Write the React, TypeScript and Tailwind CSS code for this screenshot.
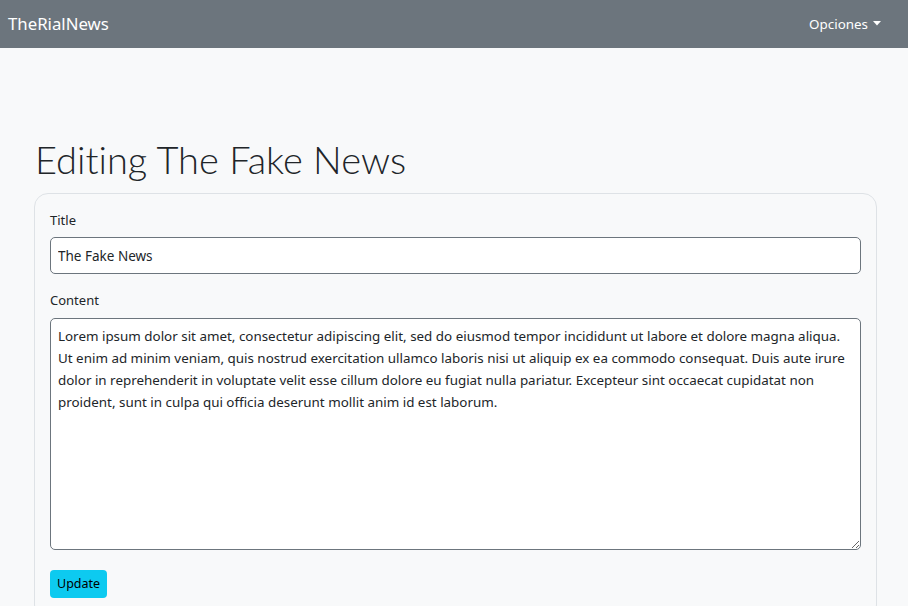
const lorem =
  "Lorem ipsum dolor sit amet, consectetur adipiscing elit, sed do eiusmod tempor incididunt ut labore et dolore magna aliqua. Ut enim ad minim veniam, quis nostrud exercitation ullamco laboris nisi ut aliquip ex ea commodo consequat. Duis aute irure dolor in reprehenderit in voluptate velit esse cillum dolore eu fugiat nulla pariatur. Excepteur sint occaecat cupidatat non proident, sunt in culpa qui officia deserunt mollit anim id est laborum.";

const App = () => {
  return (
    <div className="min-h-screen bg-[#f8f9fa] font-['Noto_Sans',sans-serif] text-[#212529]">
      <nav className="flex h-[48px] items-center justify-between bg-[#6c757d] px-2 text-white">
        <span className="text-[16.8px]">TheRialNews</span>
        <button className="mr-[19px] flex items-center gap-[5px] text-[13.4px]">
          Opciones
          <svg width="8" height="5" viewBox="0 0 8 5" fill="currentColor">
            <path d="M0 0h8L4 4.5z" />
          </svg>
        </button>
      </nav>

      <main className="pl-[34px] pr-[31px] pt-[86px]">
        <h1 className="mb-[9px] pl-px font-['Lato',sans-serif] text-[38px] font-light leading-[50px] [font-variant-ligatures:none]">
          Editing The Fake News
        </h1>
        <div className="rounded-[14px] border border-[#dee2e6] px-[15px] pb-[20px] pt-[16px]">
          <label className="block text-[13px] leading-[20px]">Title</label>
          <input
            className="mt-[7px] block h-[37px] w-full rounded-[5px] border border-[#6c757d] bg-white px-[7px] text-[13.5px] outline-none"
            defaultValue="The Fake News"
          />
          <label className="mt-[16px] block text-[13px] leading-[20px]">Content</label>
          <textarea
            className="mt-[8px] block h-[232px] w-full rounded-[5px] border border-[#6c757d] bg-white px-[7px] pb-[4px] pt-[6px] text-[13.4px] leading-[22px] outline-none"
            defaultValue={lorem}
          />
          <button className="mt-[20px] h-[28px] rounded-[4px] bg-[#0dcaf0] px-[7px] text-[12.5px] text-black">
            Update
          </button>
        </div>
      </main>
    </div>
  );
};

export default App;
